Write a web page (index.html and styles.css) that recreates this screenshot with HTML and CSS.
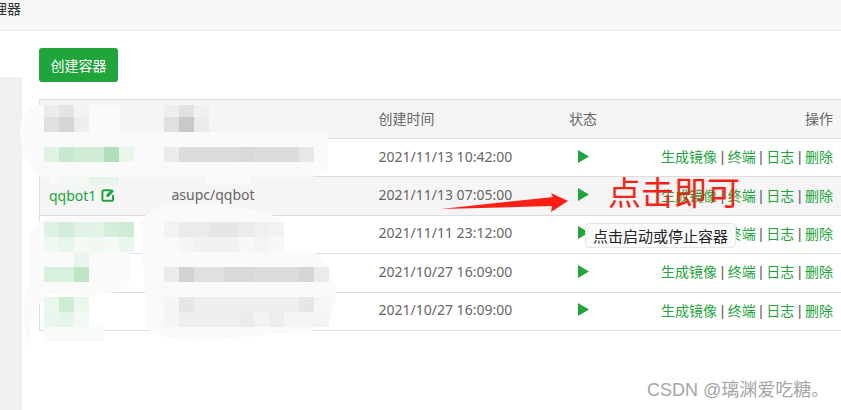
FILE: index.html
```html
<!DOCTYPE html>
<html lang="zh">
<head>
<meta charset="utf-8">
<title>容器管理器</title>
<link rel="stylesheet" href="styles.css">
</head>
<body>
<div class="page">
  <header class="topbar"><span class="topbar-title">管理器</span></header>
  <div class="body">
    <aside class="side"></aside>
    <main class="main">
      <button class="create">创建容器</button>
      <table class="grid">
        <thead>
          <tr><th class="c-name"></th><th class="c-image"></th><th class="c-time">创建时间</th><th class="c-state">状态</th><th class="c-ops">操作</th></tr>
        </thead>
        <tbody>
          <tr><td></td><td></td><td>2021/11/13 10:42:00</td><td class="state"><svg class="play" viewBox="0 0 11 13"><path d="M0 0L11 6.5L0 13Z"/></svg></td><td class="c-ops"><a>生成镜像</a><span class="sep">|</span><a>终端</a><span class="sep">|</span><a>日志</a><span class="sep">|</span><a>删除</a></td></tr>
          <tr class="alt"><td class="name-cell"><a class="name">qqbot1</a><svg class="edit" viewBox="0 0 14 14"><path d="M10 2.2H3a1.6 1.6 0 0 0-1.6 1.6v7.400A1.600 1.600 0 0 0 3 12.800h7.400a1.600 1.600 0 0 0 1.600-1.600V7" fill="none" stroke="#20a53a" stroke-width="2"/><path d="M5.500 6.500L10.800 1.200L13 3.300L7.700 8.700L5.200 9Z" fill="#20a53a"/></svg></td><td class="image">asupc/qqbot</td><td>2021/11/13 07:05:00</td><td class="state"><svg class="play" viewBox="0 0 11 13"><path d="M0 0L11 6.5L0 13Z"/></svg></td><td class="c-ops"><a>生成镜像</a><span class="sep">|</span><a>终端</a><span class="sep">|</span><a>日志</a><span class="sep">|</span><a>删除</a></td></tr>
          <tr><td></td><td></td><td>2021/11/11 23:12:00</td><td class="state"><svg class="play" viewBox="0 0 11 13"><path d="M0 0L11 6.5L0 13Z"/></svg></td><td class="c-ops"><a>生成镜像</a><span class="sep">|</span><a>终端</a><span class="sep">|</span><a>日志</a><span class="sep">|</span><a>删除</a></td></tr>
          <tr><td></td><td></td><td>2021/10/27 16:09:00</td><td class="state"><svg class="play" viewBox="0 0 11 13"><path d="M0 0L11 6.5L0 13Z"/></svg></td><td class="c-ops"><a>生成镜像</a><span class="sep">|</span><a>终端</a><span class="sep">|</span><a>日志</a><span class="sep">|</span><a>删除</a></td></tr>
          <tr><td></td><td></td><td>2021/10/27 16:09:00</td><td class="state"><svg class="play" viewBox="0 0 11 13"><path d="M0 0L11 6.5L0 13Z"/></svg></td><td class="c-ops"><a>生成镜像</a><span class="sep">|</span><a>终端</a><span class="sep">|</span><a>日志</a><span class="sep">|</span><a>删除</a></td></tr>
        </tbody>
      </table>
    </main>
  </div>

  <svg class="markup" viewBox="0 0 841 410" aria-hidden="true">
    <g fill="#fafafa">
      <path d="M40 105H120V132H328V147H328V170L312 177H40Q20 160 20 132Q20 110 40 105Z"/>
      <path d="M160 105H205V132H160Z" fill="#f5f5f5"/>
      <path d="M50 177H120V185H50ZM205 177H250V185H205Z"/>
      <path d="M140 222Q150 208 170 205H220Q270 210 284 222V252H314L328 265L337 292L330 320L310 332L200 340Q160 340 145 327V292Z"/>
      <path d="M50 217H120Q135 222 134 252H130V282Q125 292 90 296L46 294L30 320V350Q24 330 24 310Q24 295 30 285V240Q32 222 50 217Z"/>
      <path d="M44 327H104V342H44Z"/>
    </g>
    <g class="mosaic">
      <rect x="44" y="105" width="15" height="12" fill="#ececec"/><rect x="59" y="105" width="15" height="12" fill="#e4e4e4"/><rect x="74" y="105" width="15" height="12" fill="#f3f3f3"/>
      <rect x="44" y="117" width="15" height="15" fill="#e0e0e0"/><rect x="59" y="117" width="15" height="15" fill="#d5d5d5"/><rect x="74" y="117" width="15" height="15" fill="#eeeeee"/>
      <rect x="164" y="105" width="15" height="12" fill="#eeeeee"/><rect x="179" y="105" width="15" height="12" fill="#e2e2e2"/><rect x="194" y="105" width="15" height="12" fill="#f0f0f0"/>
      <rect x="164" y="117" width="15" height="15" fill="#e0e0e0"/><rect x="179" y="117" width="15" height="15" fill="#c9c9c9"/><rect x="194" y="117" width="15" height="15" fill="#ebebeb"/>

      <rect x="44" y="147" width="15" height="15" fill="#dff2e3"/><rect x="59" y="147" width="15" height="15" fill="#c8e8d0"/><rect x="74" y="147" width="30" height="15" fill="#cfecd6"/><rect x="104" y="147" width="15" height="15" fill="#b0e0bb"/><rect x="119" y="147" width="15" height="15" fill="#e8f6eb"/>
      <rect x="164" y="147" width="15" height="15" fill="#ebebeb"/><rect x="179" y="147" width="60" height="15" fill="#dcdcdc"/><rect x="239" y="147" width="15" height="15" fill="#d9d9d9"/><rect x="254" y="147" width="45" height="15" fill="#dcdcdc"/><rect x="299" y="147" width="15" height="15" fill="#e8e8e8"/>
      <rect x="59" y="177" width="30" height="8" fill="#f3f8f4"/><rect x="89" y="177" width="30" height="8" fill="#e6f4e9"/>

      <rect x="44" y="222" width="15" height="15" fill="#def2e4"/><rect x="59" y="222" width="15" height="15" fill="#d2edd9"/><rect x="74" y="222" width="15" height="15" fill="#dff2e5"/><rect x="89" y="222" width="15" height="15" fill="#e3f4e7"/><rect x="104" y="222" width="15" height="15" fill="#d5eedb"/><rect x="119" y="222" width="15" height="15" fill="#cfebd6"/>
      <rect x="44" y="237" width="15" height="15" fill="#eff8f1"/><rect x="59" y="237" width="15" height="15" fill="#e8f5ec"/><rect x="74" y="237" width="15" height="15" fill="#f3faf5"/><rect x="89" y="237" width="15" height="15" fill="#eff8f1"/><rect x="104" y="237" width="15" height="15" fill="#f4faf5"/><rect x="119" y="237" width="15" height="15" fill="#e9f6ec"/>
      <rect x="164" y="222" width="15" height="15" fill="#f2f2f2"/><rect x="179" y="222" width="30" height="15" fill="#ebebeb"/><rect x="209" y="222" width="30" height="15" fill="#e6e6e6"/><rect x="239" y="222" width="15" height="15" fill="#ebebeb"/><rect x="254" y="222" width="15" height="15" fill="#f0f0f0"/><rect x="269" y="222" width="15" height="15" fill="#f2f2f2"/>
      <rect x="164" y="237" width="15" height="15" fill="#f9f9f9"/><rect x="179" y="237" width="15" height="15" fill="#f5f5f5"/><rect x="194" y="237" width="45" height="15" fill="#f1f1f1"/><rect x="239" y="237" width="15" height="15" fill="#f7f7f7"/><rect x="254" y="237" width="15" height="15" fill="#f4f4f4"/><rect x="269" y="237" width="15" height="15" fill="#f8f8f8"/>

      <rect x="74" y="252" width="15" height="15" fill="#ebf5ed"/>
      <rect x="44" y="267" width="30" height="15" fill="#d8f0de"/><rect x="74" y="267" width="15" height="15" fill="#bce6c6"/>
      <rect x="164" y="267" width="15" height="15" fill="#ebebeb"/><rect x="179" y="267" width="15" height="15" fill="#d2d2d2"/><rect x="194" y="267" width="30" height="15" fill="#e0e0e0"/><rect x="224" y="267" width="30" height="15" fill="#d9d9d9"/><rect x="254" y="267" width="45" height="15" fill="#dcdcdc"/><rect x="299" y="267" width="15" height="15" fill="#d6d6d6"/><rect x="314" y="267" width="15" height="15" fill="#ebebeb"/>

      <rect x="44" y="297" width="15" height="15" fill="#ebf6ed"/><rect x="59" y="297" width="15" height="15" fill="#cdeed5"/><rect x="74" y="297" width="15" height="15" fill="#ebf6ed"/>
      <rect x="44" y="312" width="15" height="15" fill="#e9f6ec"/><rect x="59" y="312" width="15" height="15" fill="#e6f5e9"/><rect x="74" y="312" width="15" height="15" fill="#f3faf4"/>
      <rect x="164" y="297" width="15" height="15" fill="#f5f5f5"/><rect x="179" y="297" width="15" height="15" fill="#e6e6e6"/><rect x="194" y="297" width="60" height="15" fill="#eeeeee"/><rect x="254" y="297" width="45" height="15" fill="#eeeeee"/><rect x="299" y="297" width="15" height="15" fill="#e6e6e6"/><rect x="314" y="297" width="15" height="15" fill="#f6f6f6"/>
      <rect x="164" y="312" width="15" height="15" fill="#f5f5f5"/><rect x="179" y="312" width="60" height="15" fill="#eeeeee"/><rect x="239" y="312" width="15" height="15" fill="#ebebeb"/><rect x="254" y="312" width="15" height="15" fill="#f3f3f3"/><rect x="269" y="312" width="15" height="15" fill="#ededed"/><rect x="284" y="312" width="45" height="15" fill="#f4f4f4"/>
    </g>
    <path d="M441 209L553 197L551 193L568 201L551 212L552 206Z" fill="#fb1f14"/>
  </svg>

  <div class="tip">点击启动或停止容器</div>
  <div class="callout">点击即可</div>
  <div class="mark">CSDN @璃渊爱吃糖。</div>
</div>
</body>
</html>
```
FILE: styles.css
```css
* { box-sizing: border-box; }
html, body { margin: 0; padding: 0; }
body { background: #fff; font-family: "Noto Sans", "Noto Sans CJK SC", sans-serif; font-size: 14px; color: #666; }
.page { position: relative; width: 841px; height: 410px; overflow: hidden; }

.topbar { height: 31px; background: #f7f7f7; border-bottom: 1px solid #e8e8e8; overflow: hidden; }
.topbar-title { display: block; margin-left: -21px; font-size: 14px; line-height: 18px; color: #333; white-space: nowrap; }

.body { display: flex; height: 379px; }
.side { width: 22px; margin-top: 46px; background: #f0f0f0; flex: none; }
.main { flex: 1; padding: 17px 0 0 17px; min-width: 0; }

.create { display: block; width: 79px; height: 34px; margin-bottom: 17px; padding: 0 0 1px; border: 0; border-radius: 3px; background: #20a53a; color: #fff; font: inherit; }

.grid { width: 802px; table-layout: fixed; border-collapse: collapse; border: 1px solid #ddd; border-right: 0; }
.grid th, .grid td { height: 38.4px; padding: 0 8px 3px 10px; border-bottom: 1px solid #ddd; font-weight: 400; text-align: left; white-space: nowrap; }
.grid thead th { height: 39px; }
.grid thead tr { background: #f5f5f5; }
.grid .alt { background: #f5f5f5; }
.c-name { width: 122px; }
.c-image { width: 207px; }
.c-time { width: 190.500px; }
.c-state { width: 70px; }
.grid .c-ops { text-align: right; }
.grid a { color: #20a53a; }
.grid td.image { padding-left: 10px; }
.grid td.name-cell { padding-left: 9px; padding-bottom: 1px; }
.state { line-height: 0; }
.grid td.state { padding-bottom: 1px; }
.play { width: 11px; height: 13px; margin: 0 0 2px 9px; fill: #20a53a; display: inline-block; }
.sep { display: inline-block; width: 10.670px; text-align: center; color: #666; font-family: "Liberation Sans", sans-serif; font-size: 15px; }
.edit { width: 14px; height: 14px; margin-left: 5px; vertical-align: -1px; }

.markup { position: absolute; left: 0; top: 0; width: 841px; height: 410px; pointer-events: none; }
.tip { position: absolute; left: 585px; top: 223px; width: 151px; height: 25px; border: 1px solid #e6e6e6; border-radius: 4px; background: #fafafa; color: #222; font-size: 15px; line-height: 25px; text-align: center; white-space: nowrap; }
.callout { position: absolute; left: 608px; top: 170px; font-size: 33px; line-height: 46px; font-weight: 400; color: #fb1f14; white-space: nowrap; }
.mark { position: absolute; left: 647px; top: 377px; font-family: "Liberation Sans", "Noto Sans CJK SC", sans-serif; font-size: 18px; line-height: 26px; color: #a6a6a6; white-space: nowrap; }
```
